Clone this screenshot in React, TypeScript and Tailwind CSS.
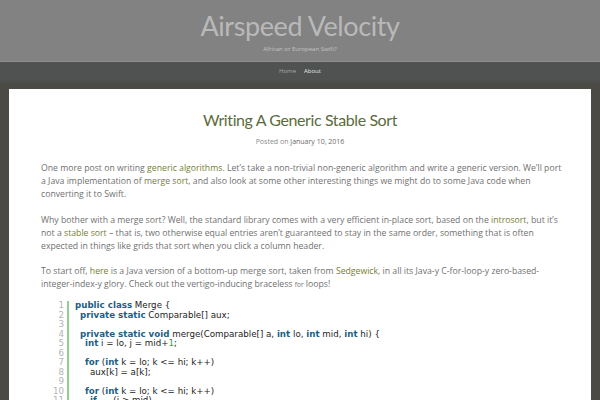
import React from "react";

const L = ({ children }: { children: React.ReactNode }) => (
  <span className="text-[#75802f]">{children}</span>
);
const K = ({ children }: { children: React.ReactNode }) => (
  <span className="font-bold text-[#1d5f86]">{children}</span>
);
const N = ({ children }: { children: React.ReactNode }) => (
  <span className="text-[#3c9a3c]">{children}</span>
);

const code: { indent: number; content: React.ReactNode }[] = [
  { indent: 0, content: <><K>public class</K> Merge {"{"}</> },
  { indent: 1, content: <><K>private static</K> Comparable[] aux;</> },
  { indent: 0, content: null },
  { indent: 1, content: <><K>private static void</K> merge(Comparable[] a, <K>int</K> lo, <K>int</K> mid, <K>int</K> hi) {"{"}</> },
  { indent: 2, content: <><K>int</K> i = lo, j = mid+<N>1</N>;</> },
  { indent: 0, content: null },
  { indent: 2, content: <><K>for</K> (<K>int</K> k = lo; k &lt;= hi; k++)</> },
  { indent: 3, content: <>aux[k] = a[k];</> },
  { indent: 0, content: null },
  { indent: 2, content: <><K>for</K> (<K>int</K> k = lo; k &lt;= hi; k++)</> },
  { indent: 3, content: <><K>if</K>      (i &gt; mid)</> },
];

const indentCls = ["pl-0", "pl-[5px]", "pl-[10px]", "pl-[15px]"];

export default function App() {
  return (
    <div className="w-[600px] h-[400px] overflow-hidden bg-[#4b4a45] font-['Open_Sans',sans-serif]">
      <header className="h-[62px] bg-[#828282] border-b border-[#8e8e8e] flex flex-col items-center">
        <h1 className="mt-[9px] text-[27px] leading-[34px] text-[#b9b9b9] font-['Lato',sans-serif] tracking-[-0.4px]">
          Airspeed Velocity
        </h1>
        <div className="text-[6px] leading-[8px] mt-[2px] text-[#c2c2c2]">African or European Swift?</div>
      </header>
      <nav className="h-[18px] bg-[#4f5251] flex items-center justify-center gap-[8px] text-[6px] pt-[1px]">
        <span className="text-[#a9a9a9]">Home</span>
        <span className="text-[#e4e4e4]">About</span>
      </nav>
      <div className="h-[4px] bg-gradient-to-b from-[#4f5251] to-[#4b4a45]" />
      <div className="px-[9px] pt-[5px]">
        <main className="bg-white h-[400px] pl-[32px] pr-[24px] pt-[19px]">
          <h2 className="text-center pr-[8px] text-[16px] leading-[24px] text-[#5b6b3c] font-['Lato',sans-serif] tracking-[-0.4px]">
            Writing A Generic Stable Sort
          </h2>
          <div className="text-center pr-[8px] text-[7px] leading-[10px] mt-[5px] text-[#8a8a8a]">
            Posted on <span className="text-[#6b6b6b]">January 10, 2016</span>
          </div>
          <div className="mt-[15px] text-[8.7px] leading-[13px] text-[#707070]">
            <p>
              One more post on writing <L>generic algorithms</L>. Let’s take a non-trivial non-generic algorithm and write a generic version. We’ll port a Java implementation of <L>merge sort</L>, and also look at some other interesting things we might do to some Java code when converting it to Swift.
            </p>
            <p className="mt-[13px]">
              Why bother with a merge sort? Well, the standard library comes with a very efficient in-place sort, based on the <L>introsort</L>, but it’s not a <L>stable sort</L> – that is, two otherwise equal entries aren’t guaranteed to stay in the same order, something that is often expected in things like grids that sort when you click a column header.
            </p>
            <p className="mt-[12px]">
              To start off, <L>here</L> is a Java version of a bottom-up merge sort, taken from <L>Sedgewick</L>, in all its Java-y C-for-loop-y zero-based-integer-index-y glory. Check out the vertigo-inducing braceless <span className="text-[6.5px]">for</span> loops!
            </p>
          </div>
          <div className="mt-[10px] flex font-['DejaVu_Sans',sans-serif] text-[8.7px] leading-[9.5px]">
            <div className="w-[26px] pr-[3px] text-right text-[#b4b4b4]">
              {code.map((_, i) => (
                <div key={i} className="h-[9.5px]">{i + 1}</div>
              ))}
            </div>
            <div className="border-l-[2px] border-[#8fd08f] pl-[6px] text-[#222]">
              {code.map((c, i) => (
                <div key={i} className={`${indentCls[c.indent]} whitespace-pre h-[9.5px]`}>
                  {c.content}
                </div>
              ))}
            </div>
          </div>
        </main>
      </div>
    </div>
  );
}
